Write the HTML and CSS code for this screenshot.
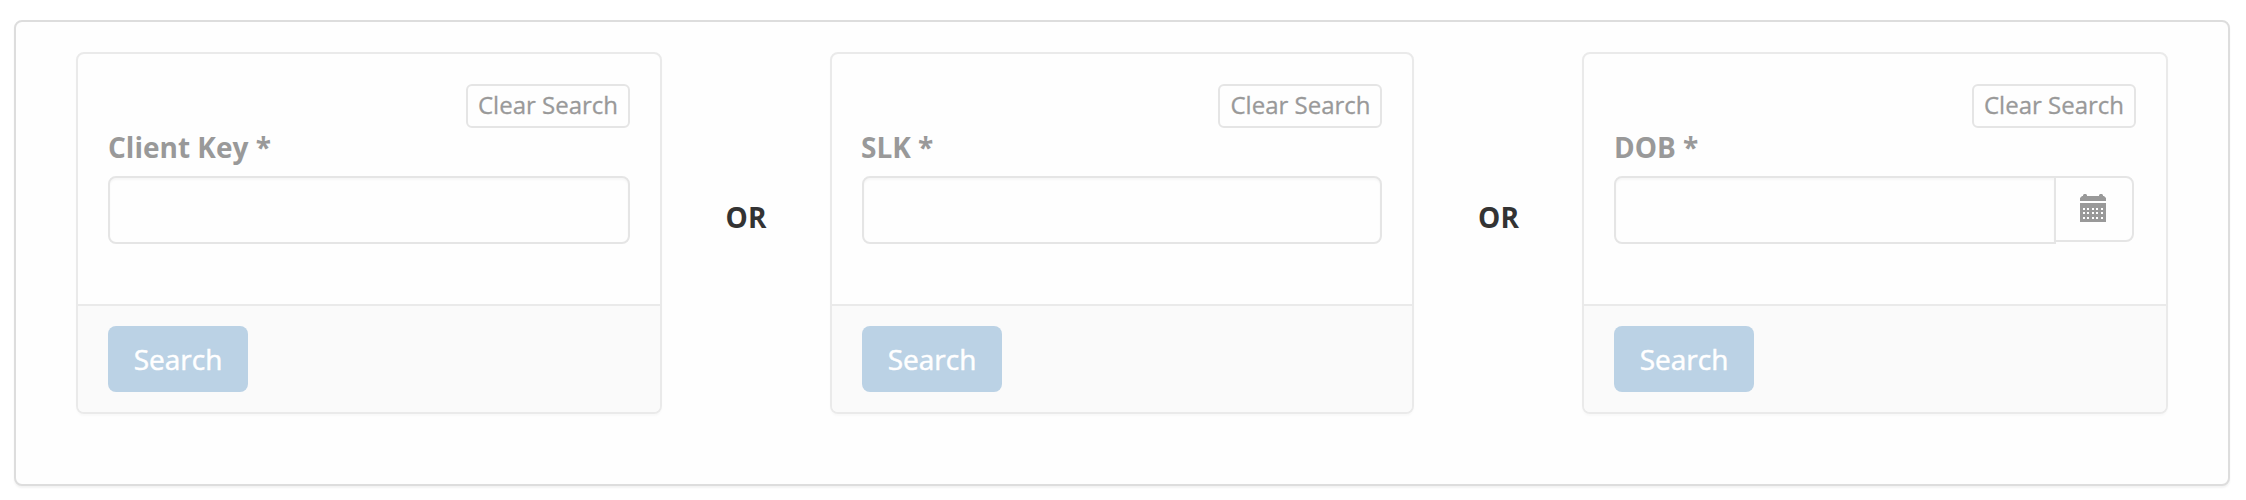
FILE: index.html
```
<!DOCTYPE html>
<html lang="en">
<head>
<meta charset="utf-8">
<title>Client Search</title>
<link rel="stylesheet" href="styles.css">
</head>
<body>
<main class="panel">
  <form class="card">
    <div class="card-body">
      <button type="button" class="clear">Clear Search</button>
      <label class="label" for="key">Client Key *</label>
      <input class="field" id="key" type="text">
    </div>
    <div class="card-footer"><button type="button" class="search">Search</button></div>
  </form>
  <div class="or">OR</div>
  <form class="card card-mid">
    <div class="card-body">
      <button type="button" class="clear">Clear Search</button>
      <label class="label" for="slk">SLK *</label>
      <input class="field" id="slk" type="text">
    </div>
    <div class="card-footer"><button type="button" class="search">Search</button></div>
  </form>
  <div class="or or-last">OR</div>
  <form class="card">
    <div class="card-body">
      <button type="button" class="clear">Clear Search</button>
      <label class="label" for="dob">DOB *</label>
      <div class="group">
        <input class="field field-date" id="dob" type="text">
        <button type="button" class="calendar" aria-label="Choose date">
          <svg width="26" height="28" viewBox="0 0 26 28">
            <path fill="#999" fill-rule="evenodd" d="M0 7V4L2 2H3V1L4 0H6L7 1V2H19V1L20 0H22L23 1V2H24L26 4V7ZM0 9H26V28H0ZM3 14V16H5V14ZM7 14V16H9V14ZM12 14V16H14V14ZM16 14V16H18V14ZM21 14V16H23V14ZM3 18V20H5V18ZM7 18V20H9V18ZM12 18V20H14V18ZM16 18V20H18V18ZM21 18V20H23V18ZM3 23V25H5V23ZM7 23V25H9V23ZM12 23V25H14V23ZM16 23V25H18V23ZM21 23V25H23V23Z"/>
          </svg>
        </button>
      </div>
    </div>
    <div class="card-footer"><button type="button" class="search">Search</button></div>
  </form>
</main>
</body>
</html>
```
FILE: styles.css
```
* { box-sizing: border-box; }
body {
  margin: 0;
  padding: 20px 16px 14px 14px;
  background: #fff;
  font-family: "Open Sans", sans-serif;
  font-size: 28px;
  line-height: 40px;
  color: #333;
}
button, input { font: inherit; margin: 0; }
.panel {
  display: flex;
  align-items: flex-start;
  height: 466px;
  padding: 30px 60px;
  border: 2px solid #ddd;
  border-radius: 8px;
  background: #fefefe;
  box-shadow: 0 2px 2px rgba(0, 0, 0, .05);
}
.card {
  width: 586px;
  height: 362px;
  flex: none;
  display: flex;
  flex-direction: column;
  border: 2px solid #eaeaea;
  border-radius: 8px;
  background: #fefefe;
  box-shadow: 0 2px 2px rgba(0, 0, 0, .025);
}
.card-mid { width: 584px; }
.card-body {
  flex: 1;
  display: flex;
  flex-direction: column;
  padding: 30px;
}
.clear {
  align-self: flex-end;
  width: 164px;
  height: 44px;
  padding: 0 0 2px;
  border: 2px solid #e5e5e5;
  border-radius: 6px;
  background: #fefefe;
  color: #999;
  font-size: 24px;
  line-height: 36px;
  -webkit-text-stroke: .3px;
}
.card-mid .clear { padding-left: 1px; }
.label {
  margin: -1px 0 9px;
  color: #999;
  font-weight: 700;
}
.card-mid .label { margin-left: -1px; }
.field {
  width: 100%;
  height: 68px;
  flex: none;
  padding: 12px 24px;
  border: 2px solid #e5e5e5;
  border-radius: 8px;
  background: #fefefe;
  box-shadow: inset 0 2px 2px rgba(0, 0, 0, .03);
}
.group { display: flex; align-items: flex-start; }
.field-date { width: 442px; border-radius: 8px 0 0 8px; }
.calendar {
  display: flex;
  align-items: center;
  justify-content: center;
  width: 80px;
  height: 66px;
  margin-left: -2px;
  padding: 0 2px 2px 0;
  border: 2px solid #e5e5e5;
  border-radius: 0 8px 8px 0;
  background: #fefefe;
}
.card-footer {
  height: 108px;
  padding: 20px 30px;
  border-top: 2px solid #eaeaea;
  border-radius: 0 0 6px 6px;
  background: #fafafa;
}
.search {
  display: block;
  width: 140px;
  height: 66px;
  padding: 0 0 1px;
  border: 0;
  border-radius: 8px;
  background: #bbd2e5;
  color: #fff;
  -webkit-text-stroke: .5px;
}
.or {
  flex: none;
  width: 168px;
  margin-top: 145px;
  text-align: center;
  font-weight: 700;
}
.or-last { padding-left: 1px; }
```
